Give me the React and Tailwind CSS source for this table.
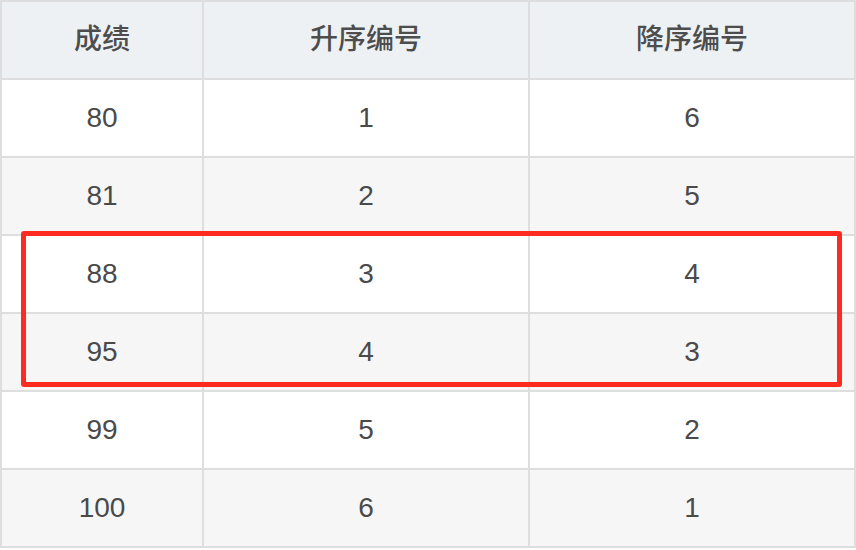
import React from 'react';

const rows = [
    ['80', '1', '6'],
    ['81', '2', '5'],
    ['88', '3', '4'],
    ['95', '4', '3'],
    ['99', '5', '2'],
    ['100', '6', '1'],
];

export default function App() {
    return (
        <div
            className="relative w-[856px] h-[550px] bg-white text-[28px] text-[#4a4a4a]"
            style={{ fontFamily: '"Liberation Sans", "Noto Sans CJK SC", sans-serif' }}
        >
            <div className="grid grid-cols-[200px_324px_324px] auto-rows-[76px] gap-[2px] p-[2px] bg-[#dedede] w-[856px]">
                {['成绩', '升序编号', '降序编号'].map((h) => (
                    <div key={h} className="flex items-center justify-center bg-[#eef1f4] font-medium text-[#4d4d4d]">
                        {h}
                    </div>
                ))}
                {rows.map((r, i) =>
                    r.map((v, j) => (
                        <div
                            key={i + '-' + j}
                            className={`flex items-center justify-center ${i % 2 === 0 ? 'bg-white' : 'bg-[#f6f6f6]'}`}
                        >
                            {v}
                        </div>
                    ))
                )}
            </div>
            {/* highlight box */}
            <div className="absolute left-[21px] top-[231px] w-[821px] h-[156px] border-[5px] border-[#ff2a20] rounded-[3px]" />
        </div>
    );
}
